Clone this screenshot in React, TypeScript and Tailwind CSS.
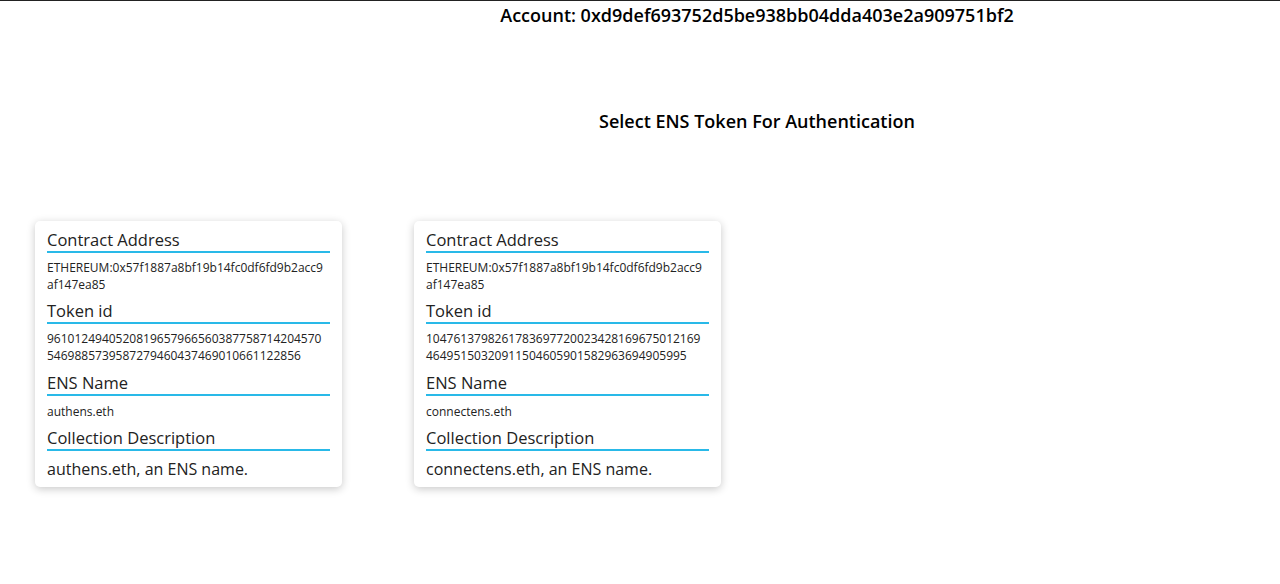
import React from "react";

type Token = {
  contract: string[];
  tokenId: string[];
  ensName: string;
  description: string;
};

const tokens: Token[] = [
  {
    contract: ["ETHEREUM:0x57f1887a8bf19b14fc0df6fd9b2acc9", "af147ea85"],
    tokenId: ["9610124940520819657966560387758714204570", "5469885739587279460437469010661122856"],
    ensName: "authens.eth",
    description: "authens.eth, an ENS name.",
  },
  {
    contract: ["ETHEREUM:0x57f1887a8bf19b14fc0df6fd9b2acc9", "af147ea85"],
    tokenId: ["1047613798261783697720023428169675012169", "46495150320911504605901582963694905995"],
    ensName: "connectens.eth",
    description: "connectens.eth, an ENS name.",
  },
];

const Label = ({ children }: { children: React.ReactNode }) => (
  <h4 className="text-[16.5px] leading-[20px] text-[#222] border-b-2 border-[#29b9e8] pb-[1px]">
    {children}
  </h4>
);

const Lines = ({ lines }: { lines: string[] }) => (
  <p className="mt-[6px] mb-[8px] text-[12px] leading-[17px] text-[#222] whitespace-nowrap">
    {lines.map((l, i) => (
      <span key={i} className="block">
        {l}
      </span>
    ))}
  </p>
);

const TokenCard = ({ token }: { token: Token }) => {
  return (
    <div className="w-[307px] bg-white rounded-[5px] shadow-[0_2px_8px_rgba(0,0,0,0.22)] px-3 pt-[9px] pb-[6px]">
      <Label>Contract Address</Label>
      <Lines lines={token.contract} />
      <Label>Token id</Label>
      <div className="mb-[9px]">
        <Lines lines={token.tokenId} />
      </div>
      <Label>ENS Name</Label>
      <p className="mt-[7px] mb-[8px] text-[12px] leading-[17px] text-[#222]">{token.ensName}</p>
      <Label>Collection Description</Label>
      <p className="mt-[6px] text-[16px] leading-[24px] text-[#222]">{token.description}</p>
    </div>
  );
};

export default function App() {
  return (
    <div className="min-h-[584px] bg-white border-t border-[#222] font-['Open_Sans',sans-serif]">
      <div className="pl-[234px] text-center">
        <h2 className="pt-[2px] text-[18px] leading-[24px] font-semibold text-black">
          Account: 0xd9def693752d5be938bb04dda403e2a909751bf2
        </h2>
        <h3 className="mt-[82px] text-[18px] leading-[24px] font-semibold text-black">
          Select ENS Token For Authentication
        </h3>
      </div>
      <div className="mt-[88px] flex gap-[72px] pl-[35px]">
        {tokens.map((t) => (
          <TokenCard key={t.ensName} token={t} />
        ))}
      </div>
    </div>
  );
}
